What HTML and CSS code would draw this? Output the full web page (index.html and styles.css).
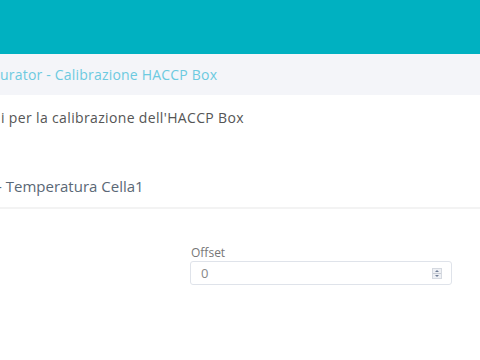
FILE: index.html
```html
<!DOCTYPE html>
<html lang="it">
<head>
<meta charset="utf-8">
<title>Calibrazione HACCP Box</title>
<link rel="stylesheet" href="styles.css">
</head>
<body>
<header class="topbar"></header>
<nav class="crumbs"><span class="crumb-text">urator - Calibrazione HACCP Box</span></nav>
<main class="content">
  <p class="subtitle">i per la calibrazione dell'HACCP Box</p>
  <h2 class="section-title">- Temperatura Cella1</h2>
  <div class="form-row">
    <div class="field">
      <label class="field-label" for="offset">Offset</label>
      <div class="input-box">
        <span class="input-value">0</span>
        <span class="spinner">
          <svg width="10" height="11" viewBox="0 0 10 11">
            <rect x="0.5" y="0.5" width="9" height="10" fill="#eef0f4" stroke="#d5d9e0"/>
            <line x1="1" y1="5.5" x2="9" y2="5.5" stroke="#c8ccd4"/>
            <path d="M3 4 L5 2 L7 4 Z" fill="#6f7d96"/>
            <path d="M3 7 L5 9 L7 7 Z" fill="#6f7d96"/>
          </svg>
        </span>
      </div>
    </div>
  </div>
</main>
</body>
</html>
```
FILE: styles.css
```css
html, body {
  margin: 0;
  padding: 0;
  background: #ffffff;
  overflow: hidden;
}
body {
  font-family: "Open Sans", "Noto Sans", sans-serif;
  color: #555;
}
.topbar {
  height: 54px;
  background: #00b1c1;
}
.crumbs {
  height: 41px;
  background: #f4f5f9;
  display: flex;
  align-items: center;
  padding-left: 0;
}
.crumb-text {
  font-size: 14px;
  color: #6ccae0;
  letter-spacing: 0.2px;
  white-space: nowrap;
}
.content {
  padding-top: 13px;
}
.subtitle {
  margin: 0;
  font-size: 14px;
  line-height: 20px;
  color: #555;
  letter-spacing: 0.35px;
  padding-left: 1px;
  white-space: nowrap;
}
.section-title {
  margin: 48px 0 0;
  font-weight: 400;
  font-size: 15px;
  line-height: 20px;
  color: #5a6876;
  text-indent: -3px;
  padding-bottom: 11px;
  border-bottom: 2px solid #f3f3f3;
  white-space: nowrap;
}
.form-row {
  display: flex;
  padding: 37px 28px 0 190px;
}
.field {
  flex: 1;
  display: flex;
  flex-direction: column;
}
.field-label {
  font-size: 12px;
  line-height: 14px;
  color: #777;
  padding-left: 1px;
  margin-bottom: 1px;
}
.input-box {
  height: 22px;
  border: 1px solid #dfe3ea;
  border-radius: 3px;
  display: flex;
  align-items: center;
  justify-content: space-between;
  padding: 0 9px 0 10px;
}
.input-value {
  font-size: 13px;
  color: #888;
}
.spinner {
  display: flex;
}
```
